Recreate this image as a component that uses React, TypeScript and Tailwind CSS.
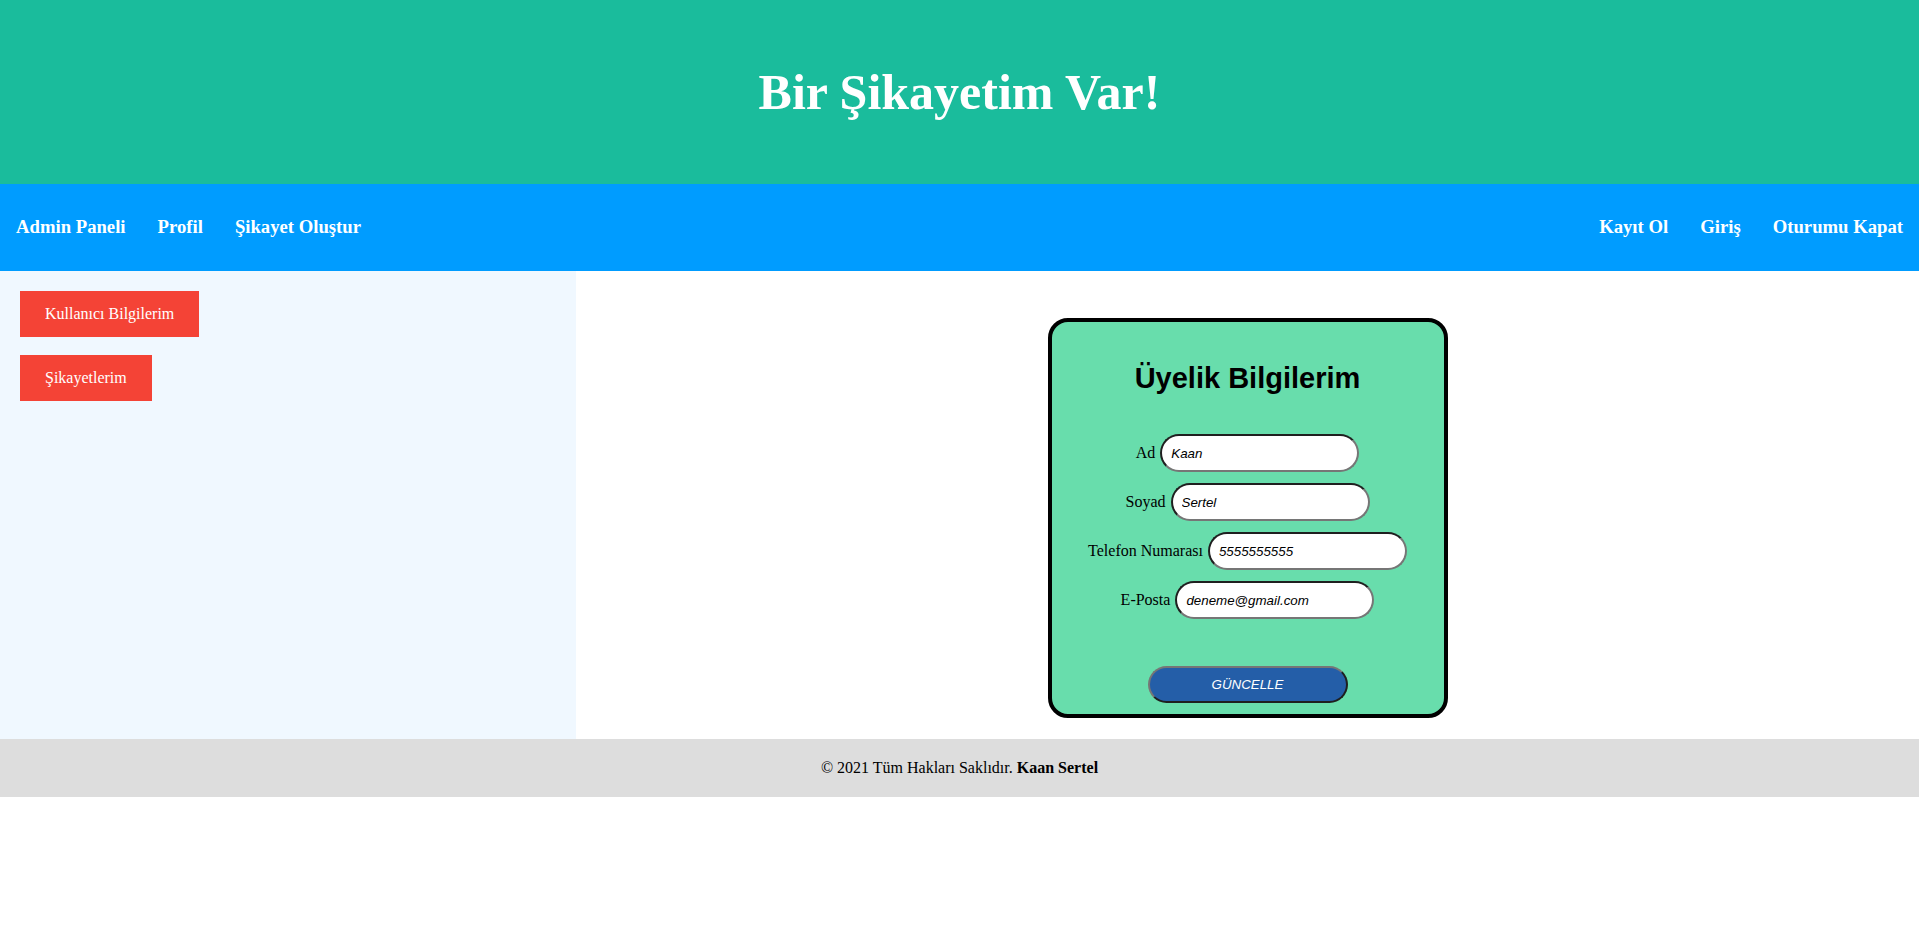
const fields = [
  { label: "Ad", value: "Kaan" },
  { label: "Soyad", value: "Sertel" },
  { label: "Telefon Numarası", value: "5555555555" },
  { label: "E-Posta", value: "deneme@gmail.com" },
];

const leftLinks = ["Admin Paneli", "Profil", "Şikayet Oluştur"];
const rightLinks = ["Kayıt Ol", "Giriş", "Oturumu Kapat"];

export default function App() {
  return (
    <div className="w-full font-['Liberation_Serif',serif] text-black">
      {/* Header */}
      <header className="h-[184px] bg-[#1abc9c] flex items-center justify-center">
        <h1 className="text-[50px] font-bold text-white leading-none">Bir Şikayetim Var!</h1>
      </header>

      {/* Nav */}
      <nav className="h-[87px] bg-[#009cff] flex items-center justify-between">
        <div className="flex">
          {leftLinks.map((l) => (
            <a key={l} className="px-4 text-[18.7px] font-bold text-white cursor-pointer">
              {l}
            </a>
          ))}
        </div>
        <div className="flex">
          {rightLinks.map((l) => (
            <a key={l} className="px-4 text-[18.7px] font-bold text-white cursor-pointer">
              {l}
            </a>
          ))}
        </div>
      </nav>

      {/* Content */}
      <div className="flex">
        <aside className="w-[576px] shrink-0 bg-[#f0f8ff] pt-[20px] pl-5 flex flex-col items-start gap-[18px]">
          <button className="h-[46px] px-[25px] bg-[#f44336] text-white text-[16px] flex items-center">
            Kullanıcı Bilgilerim
          </button>
          <button className="h-[46px] px-[25px] bg-[#f44336] text-white text-[16px] flex items-center">
            Şikayetlerim
          </button>
        </aside>

        <main className="flex-1 flex justify-center pt-[47px] pb-[21px]">
          <div className="w-[400px] h-[400px] border-4 border-black rounded-[20px] bg-[#68ddac] flex flex-col items-center pt-[39px]">
            <h2 className="h-[34px] leading-[34px] text-[29px] font-bold font-['Liberation_Sans',sans-serif]">
              Üyelik Bilgilerim
            </h2>
            <div className="mt-[39px] flex flex-col gap-[11px]">
              {fields.map((f) => (
                <div key={f.label} className="flex items-center justify-center gap-[5px] h-[38px]">
                  <label className="text-[16px]">{f.label}</label>
                  <input
                    readOnly
                    value={f.value}
                    className="w-[199px] h-[38px] rounded-full bg-white border-2 border-t-[#1f1f1f] border-l-[#1f1f1f] border-r-[#767676] border-b-[#767676] pl-[9px] text-[13.33px] italic font-['Liberation_Sans',sans-serif] text-black outline-none"
                  />
                </div>
              ))}
            </div>
            <button className="mt-[47px] w-[200px] h-[37px] rounded-full bg-[#245ea8] border-2 border-t-[#767676] border-l-[#767676] border-r-[#1f1f1f] border-b-[#1f1f1f] text-white text-[13.33px] italic font-['Liberation_Sans',sans-serif]">
              GÜNCELLE
            </button>
          </div>
        </main>
      </div>

      {/* Footer */}
      <footer className="h-[58px] bg-[#dddddd] flex items-center justify-center text-[16px]">
        <span>
          © 2021 Tüm Hakları Saklıdır. <b>Kaan Sertel</b>
        </span>
      </footer>
    </div>
  );
}
